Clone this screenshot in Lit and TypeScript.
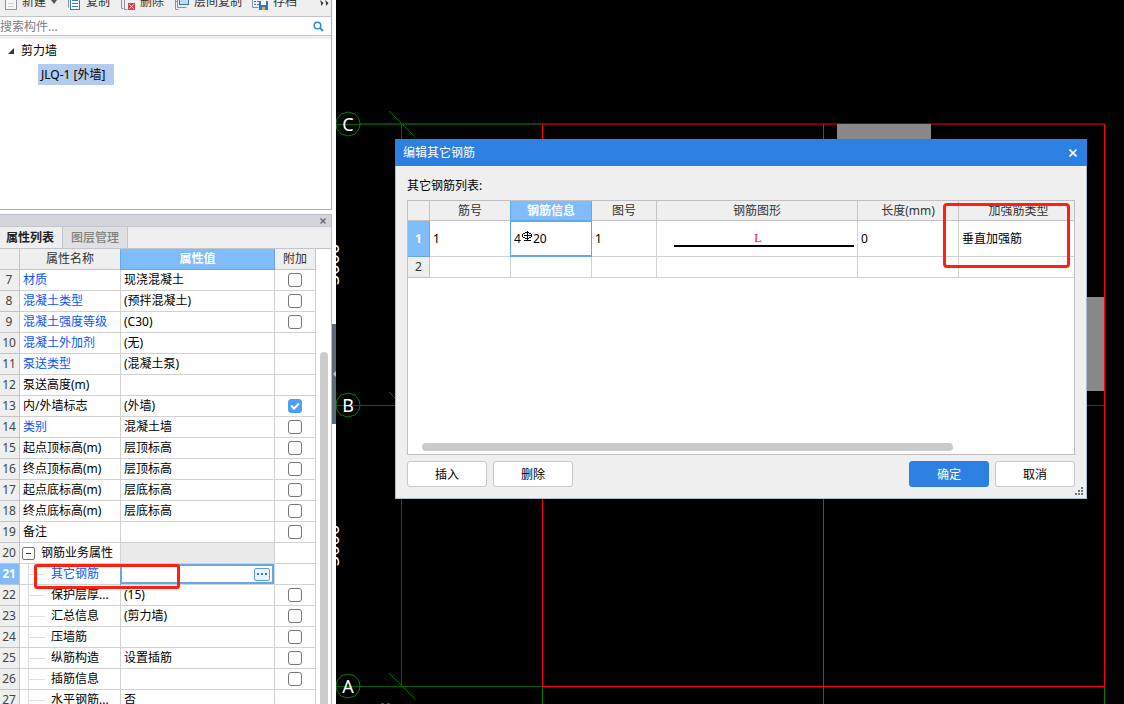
import { LitElement, html, svg, css, nothing } from "lit";
import { customElement, property } from "lit/decorators.js";
import { classMap } from "lit/directives/class-map.js";

interface Prop {
  no: number;
  name: string;
  value?: string;
  link?: boolean;
  box?: boolean;
  checked?: boolean;
  child?: boolean;
  group?: boolean;
  active?: boolean;
}

const PROPS: Prop[] = [
  { no: 7, name: "材质", value: "现浇混凝土", link: true, box: true },
  { no: 8, name: "混凝土类型", value: "(预拌混凝土)", link: true, box: true },
  { no: 9, name: "混凝土强度等级", value: "(C30)", link: true, box: true },
  { no: 10, name: "混凝土外加剂", value: "(无)", link: true },
  { no: 11, name: "泵送类型", value: "(混凝土泵)", link: true },
  { no: 12, name: "泵送高度(m)" },
  { no: 13, name: "内/外墙标志", value: "(外墙)", box: true, checked: true },
  { no: 14, name: "类别", value: "混凝土墙", link: true, box: true },
  { no: 15, name: "起点顶标高(m)", value: "层顶标高", box: true },
  { no: 16, name: "终点顶标高(m)", value: "层顶标高", box: true },
  { no: 17, name: "起点底标高(m)", value: "层底标高", box: true },
  { no: 18, name: "终点底标高(m)", value: "层底标高", box: true },
  { no: 19, name: "备注", box: true },
  { no: 20, name: "钢筋业务属性", group: true },
  { no: 21, name: "其它钢筋", link: true, child: true, active: true },
  { no: 22, name: "保护层厚...", value: "(15)", child: true, box: true },
  { no: 23, name: "汇总信息", value: "(剪力墙)", child: true, box: true },
  { no: 24, name: "压墙筋", child: true, box: true },
  { no: 25, name: "纵筋构造", value: "设置插筋", child: true, box: true },
  { no: 26, name: "插筋信息", child: true, box: true },
  { no: 27, name: "水平钢筋...", value: "否", child: true },
];

const base = css`
  * {
    box-sizing: border-box;
  }
  button,
  input {
    font: inherit;
    color: inherit;
    margin: 0;
    padding: 0;
  }
  button {
    border: 0;
    background: none;
  }
  table {
    border-collapse: separate;
    border-spacing: 0;
    table-layout: fixed;
  }
  th,
  td {
    padding: 0;
    font-weight: 400;
    overflow: hidden;
    white-space: nowrap;
    border-right: 1px solid #d2d2d2;
    border-bottom: 1px solid #d2d2d2;
  }
  th {
    background: #efefef;
    color: #333;
    text-align: center;
    border-color: #c4c4c8;
  }
`;

@customElement("component-tree")
class ComponentTree extends LitElement {
  static styles = [
    base,
    css`
      :host {
        display: block;
        background: #efefef;
        border-right: 1px solid #a9abb2;
        border-bottom: 1px solid #a9abb2;
      }
      .toolbar {
        display: flex;
        align-items: flex-end;
        height: 17px;
        overflow: hidden;
        border-bottom: 1px solid #c3c5cc;
        padding: 0 2px 5px 4px;
      }
      .tool {
        display: flex;
        align-items: center;
        gap: 5px;
        height: 18px;
        line-height: 18px;
        color: #333;
        margin-right: 10px;
        white-space: nowrap;
      }
      .tool svg {
        margin-top: 2px;
      }
      .caret {
        border: 3px solid transparent;
        border-top: 4px solid #555;
        border-bottom: 0;
      }
      .more {
        margin: 0 0 5px auto;
      }
      svg {
        display: block;
      }
      .search {
        display: flex;
        align-items: center;
        height: 19px;
        background: #fff;
        border-bottom: 1px solid #c3c5cc;
        padding-right: 7px;
      }
      .search input {
        flex: 1;
        min-width: 0;
        border: 0;
        outline: 0;
        height: 18px;
        padding-top: 1px;
        background: none;
      }
      .search input::placeholder {
        color: #808080;
        opacity: 1;
      }
      .tree {
        margin: 3px 0 0;
        padding: 0 0 0 8px;
        height: 170px;
        background: #fff;
        list-style: none;
      }
      .node {
        display: flex;
        align-items: center;
        gap: 7px;
        height: 24px;
      }
      .leaf {
        display: inline-block;
        margin-left: 30px;
        height: 21px;
        line-height: 21px;
        margin-top: 1px;
        padding: 0 4px 0 3px;
        min-width: 76px;
        background: #b2cbee;
      }
    `,
  ];

  render() {
    return html`
      <div class="toolbar">
        <button class="tool">
          <svg width="13" height="14" viewBox="0 0 13 14">
            <rect x="1.5" y=".5" width="11" height="13" fill="#f6f6f8" stroke="#8a93a3" />
            <path d="M4 7.500h6M4 10.500h6" stroke="#e2c9cd" />
          </svg>
          新建
          <span class="caret"></span>
        </button>
        <button class="tool">
          <svg width="14" height="14" viewBox="0 0 14 14">
            <path d="M1.500 0v11.500" stroke="#8a93a3" />
            <rect x="3.500" y=".5" width="9" height="13" fill="#fff" stroke="#3577c4" />
            <path d="M5 4.500h6M5 7.500h6M5 10.500h6" stroke="#3577c4" />
          </svg>
          复制
        </button>
        <button class="tool">
          <svg width="15" height="14" viewBox="0 0 15 14">
            <path d="M1.500 0v12.500h2M4.500 0v13.500h3" stroke="#8a93a3" fill="none" />
            <rect x="8" y="7" width="7" height="7" fill="#d9434e" />
            <path d="M9.500 8.500l4 4M13.500 8.500l-4 4" stroke="#fff" />
          </svg>
          删除
        </button>
        <button class="tool">
          <svg width="15" height="14" viewBox="0 0 15 14">
            <path d="M1.500 4v9.500h3M1.500 5.500h2" stroke="#e8762c" fill="none" />
            <path d="M3.500 2v9.500h9" stroke="#e8762c" fill="none" />
            <rect x="5.500" y=".5" width="9" height="8" fill="#bcdcf8" stroke="#3577c4" />
          </svg>
          层间复制
        </button>
        <button class="tool">
          <svg width="16" height="14" viewBox="0 0 16 14">
            <path d="M.5 0v11.500h6" stroke="#8a93a3" fill="none" />
            <path d="M2 5.500h5M2 8.500h5" stroke="#3577c4" stroke-dasharray="2 1" />
            <rect x="7.500" y="5.500" width="8" height="8" fill="#3577c4" stroke="#3577c4" />
            <rect x="9" y="5" width="5" height="4" fill="#fff" />
            <rect x="10" y="11" width="3" height="3" fill="#f2a33a" />
          </svg>
          存档
        </button>
        <button class="more" aria-label="更多">
          <svg width="9" height="6" viewBox="0 0 9 6">
            <path d="M0 0l3.500 3L1 6V3zM5 0l3.500 3L6 6V3z" fill="#333" />
          </svg>
        </button>
      </div>
      <label class="search">
        <input type="text" placeholder="搜索构件..." aria-label="搜索构件" />
        <svg width="11" height="11" viewBox="0 0 11 11" fill="none" stroke="#2f8fd0">
          <circle cx="4.500" cy="4.500" r="3.300" stroke-width="1.500" />
          <path d="M7 7l3 3" stroke-width="2" />
        </svg>
      </label>
      <ul class="tree">
        <li class="node">
          <svg width="6" height="6" viewBox="0 0 6 6"><path d="M6 0v6H0z" fill="#333" /></svg>
          剪力墙
        </li>
        <li class="leaf">JLQ-1 [外墙]</li>
      </ul>
    `;
  }
}

@customElement("property-panel")
class PropertyPanel extends LitElement {
  static styles = [
    base,
    css`
      :host {
        display: flex;
        flex-direction: column;
        min-height: 0;
        border: 1px solid #b9bcc4;
        border-width: 1px 1px 0 0;
        background: #efefef;
        position: relative;
      }
      .dock {
        height: 12px;
        background: #d3d5da;
        border-bottom: 1px solid #c3c5cc;
        display: flex;
        justify-content: flex-end;
        align-items: center;
        padding-right: 5px;
      }
      svg {
        display: block;
      }
      .tabs {
        display: flex;
        height: 22px;
        border-bottom: 1px solid #c3c5cc;
      }
      .tab {
        width: 65px;
        border-right: 1px solid #c3c5cc;
        background: #e0e0e2;
        color: #808080;
        font-weight: 500;
      }
      .tab.on {
        width: 63px;
        padding-right: 2px;
        background: #efefef;
        color: #222;
        font-weight: 700;
      }
      .body {
        flex: 1;
        min-height: 0;
        display: flex;
        background: #fff;
        overflow: hidden;
      }
      table {
        width: 316px;
        flex: none;
        align-self: flex-start;
      }
      .c-no {
        width: 20px;
      }
      .c-name {
        width: 101px;
      }
      .c-val {
        width: 154px;
      }
      .c-add {
        width: 41px;
      }
      tr {
        height: 21px;
      }
      td,
      th {
        height: 21px;
        line-height: 20px;
      }
      td {
        padding-left: 3px;
      }
      thead th.sel {
        background: #80bbfc;
        color: #fff;
        border-color: #64a8ec;
        box-shadow: -1px 0 0 #64a8ec;
        font-weight: 700;
      }
      .no {
        padding-right: 1px;
        color: #444;
      }
      .no.on {
        background: #80bbfc;
        color: #fff;
        font-weight: 700;
      }
      .link {
        color: #0a55ff;
      }
      .group {
        padding-left: 2px;
      }
      .groupline {
        display: flex;
        align-items: center;
        gap: 6px;
      }
      .fold {
        width: 13px;
        height: 13px;
        border: 1px solid #777;
        border-radius: 2px;
        background: #fff;
        display: grid;
        place-items: center;
      }
      .fold::after {
        content: "";
        width: 5px;
        height: 1px;
        background: #333;
      }
      .child {
        padding-left: 8px;
      }
      .childline {
        display: flex;
        align-items: center;
        height: 20px;
        border-left: 1px solid #dedede;
      }
      .childline::before {
        content: "";
        width: 16px;
        height: 1px;
        margin-right: 6px;
        background: #dedede;
      }
      .shade {
        background: #eaeaea;
      }
      .add {
        padding: 0;
      }
      .add input {
        display: block;
        margin: 0 auto;
        appearance: none;
        width: 14px;
        height: 14px;
        border: 1px solid #777;
        border-radius: 3px;
        background: #fff;
      }
      .add input:checked {
        border-color: #4f9df8;
        background: #4f9df8;
      }
      .tick {
        display: grid;
        place-items: center;
      }
      .tick > * {
        grid-area: 1 / 1;
      }
      .tick svg {
        pointer-events: none;
        z-index: 1;
      }
      .edit {
        padding: 0;
        box-shadow: -1px 0 0 #64a8ec;
      }
      .editor {
        display: flex;
        align-items: center;
        height: 20px;
        border: 2px solid #64a8ec;
        border-left-width: 1px;
        padding-right: 2px;
      }
      .editor input {
        flex: 1;
        min-width: 0;
        border: 0;
        outline: 0;
        height: 16px;
        background: none;
      }
      .dots {
        width: 16px;
        height: 13px;
        border: 1px solid #5d9de0;
        border-radius: 2px;
        background: #e9f3fe;
        display: grid;
        place-items: center;
      }
      .track {
        flex: 1;
        padding: 103px 3px 0 4px;
      }
      .thumb {
        height: 100%;
        border-radius: 4px 4px 0 0;
        background: #cbcbcb;
      }
      .mark {
        position: absolute;
        left: 34px;
        top: 349px;
        width: 146px;
        height: 25px;
        border: 3px solid #ff2010;
        border-radius: 3px;
        pointer-events: none;
      }
    `,
  ];

  private nameCell(p: Prop) {
    if (p.group)
      return html`<td class="group">
        <div class="groupline"><button class="fold" aria-label="折叠"></button>${p.name}</div>
      </td>`;
    if (p.child)
      return html`<td class=${classMap({ child: true, link: !!p.link })}>
        <div class="childline">${p.name}</div>
      </td>`;
    return html`<td class=${classMap({ link: !!p.link })}>${p.name}</td>`;
  }

  private valueCell(p: Prop) {
    if (p.active)
      return html`<td class="edit">
        <div class="editor">
          <input type="text" aria-label=${p.name} />
          <button class="dots" aria-label="编辑">
            <svg width="10" height="2" viewBox="0 0 10 2" fill="#2f78d0">
              <path d="M0 0h2v2H0zM4 0h2v2H4zM8 0h2v2H8z" />
            </svg>
          </button>
        </div>
      </td>`;
    return html`<td class=${classMap({ shade: !!p.group })}>${p.value ?? nothing}</td>`;
  }

  render() {
    return html`
      <div class="dock">
        <button aria-label="关闭">
          <svg width="6" height="6" viewBox="0 0 6 6">
            <path d="M.5.5l5 5M5.500.5l-5 5" stroke="#666" stroke-width="1.300" />
          </svg>
        </button>
      </div>
      <div class="tabs">
        <button class="tab on">属性列表</button>
        <button class="tab">图层管理</button>
      </div>
      <div class="body">
        <table>
          <colgroup>
            <col class="c-no" />
            <col class="c-name" />
            <col class="c-val" />
            <col class="c-add" />
          </colgroup>
          <thead>
            <tr>
              <th></th>
              <th>属性名称</th>
              <th class="sel">属性值</th>
              <th>附加</th>
            </tr>
          </thead>
          <tbody>
            ${PROPS.map(
              (p) => html`<tr>
                <th class=${classMap({ no: true, on: !!p.active })}>${p.no}</th>
                ${this.nameCell(p)}${this.valueCell(p)}
                <td class="add">
                  ${p.box
                    ? html`<label class="tick">
                        <input type="checkbox" aria-label=${p.name} ?checked=${p.checked} />
                        ${p.checked
                          ? html`<svg width="10" height="8" viewBox="0 0 10 8">
                              <path d="M1 3.500l3 3L9 1.500" fill="none" stroke="#fff" stroke-width="2" />
                            </svg>`
                          : nothing}
                      </label>`
                    : nothing}
                </td>
              </tr>`
            )}
          </tbody>
        </table>
        <div class="track"><div class="thumb"></div></div>
      </div>
      <div class="mark"></div>
    `;
  }
}

@customElement("rebar-dialog")
class RebarDialog extends LitElement {
  static styles = [
    base,
    css`
      :host {
        display: flex;
        flex-direction: column;
        background: #efefef;
        border: 1px solid #b4bccf;
        border-top: 0;
      }
      .title {
        display: flex;
        align-items: center;
        justify-content: space-between;
        height: 27px;
        margin: 0 -1px;
        padding: 0 10px 0 8px;
        background: #2c80e2;
        color: #fff;
      }
      svg {
        display: block;
      }
      .content {
        flex: 1;
        display: flex;
        flex-direction: column;
        padding: 11px 11px 11px;
        position: relative;
      }
      .caption {
        height: 23px;
        line-height: 18px;
      }
      .grid {
        flex: 1;
        display: flex;
        flex-direction: column;
        justify-content: space-between;
        border: 1px solid #c0c0c4;
        background: #fff;
        overflow: hidden;
      }
      table {
        width: 671px;
      }
      .w0 {
        width: 22px;
      }
      .w1,
      .w2 {
        width: 81px;
      }
      .w3 {
        width: 65px;
      }
      .w4 {
        width: 201px;
      }
      .w5 {
        width: 101px;
      }
      .w6 {
        width: 120px;
      }
      thead th {
        height: 20px;
        line-height: 18px;
        padding-top: 1px;
      }
      th.sel {
        background: #80bbfc;
        color: #fff;
        font-weight: 700;
        border-color: #64a8ec;
        box-shadow: -1px 0 0 #64a8ec;
      }
      .row1 > * {
        height: 36px;
      }
      .row2 > * {
        height: 21px;
        line-height: 20px;
      }
      td {
        padding-left: 3px;
      }
      .focus {
        padding: 0 0 0 3px;
        border: 2px solid #64a8ec;
        border-width: 1px 1px 2px 0;
        box-shadow: -1px 0 0 #64a8ec;
      }
      .info {
        display: flex;
        align-items: center;
      }
      .info svg {
        margin-bottom: 4px;
      }
      .shape {
        padding: 0;
      }
      .bar {
        margin: 0 3px 0 17px;
        border-bottom: 2px solid #000;
        height: 17px;
        padding-right: 12px;
        font: 12px/16px "Liberation Serif", serif;
        color: #f00;
        text-align: center;
      }
      .thumb {
        width: 531px;
        height: 8px;
        margin: 0 0 3px 14px;
        border-radius: 4px;
        background: #cbcbcb;
      }
      .actions {
        display: flex;
        gap: 6px;
        padding-top: 6px;
      }
      .btn {
        width: 80px;
        height: 26px;
        padding-top: 1px;
        border: 1px solid #c8c8cc;
        border-radius: 3px;
        background: #fff;
      }
      .primary {
        margin-left: auto;
        border-color: #2c80e2;
        background: #2c80e2;
        color: #fff;
      }
      .grip {
        position: absolute;
        right: 3px;
        bottom: 3px;
      }
      .mark {
        position: absolute;
        right: 16px;
        top: 37px;
        width: 127px;
        height: 65px;
        border: 3px solid #ff2010;
        border-radius: 4px;
        pointer-events: none;
      }
    `,
  ];

  render() {
    return html`
      <div class="title">
        编辑其它钢筋
        <button aria-label="关闭">
          <svg width="8" height="8" viewBox="0 0 8 8">
            <path d="M.5.5l7 7M7.500.5l-7 7" stroke="#fff" stroke-width="1.600" />
          </svg>
        </button>
      </div>
      <div class="content">
        <div class="caption">其它钢筋列表:</div>
        <div class="grid">
          <table>
            <colgroup>
              ${[0, 1, 2, 3, 4, 5, 6].map((i) => html`<col class="w${i}" />`)}
            </colgroup>
            <thead>
              <tr>
                <th></th>
                <th>筋号</th>
                <th class="sel">钢筋信息</th>
                <th>图号</th>
                <th>钢筋图形</th>
                <th>长度(mm)</th>
                <th>加强筋类型</th>
              </tr>
            </thead>
            <tbody>
              <tr class="row1">
                <th class="sel">1</th>
                <td>1</td>
                <td class="focus">
                  <span class="info"
                    >4<svg width="12" height="11" viewBox="0 0 12 11" fill="none" stroke="#000">
                      <path d="M4 1.500h4M4 7.500h4M1.500 3v3M10.500 3v3M2 2.500h2M8 2.500h2M2 6.500h2M8 6.500h2" />
                      <path d="M6.500 0v10M3 4.500h7M3 9.500h7" /></svg
                    >20</span
                  >
                </td>
                <td>1</td>
                <td class="shape"><div class="bar">L</div></td>
                <td>0</td>
                <td>垂直加强筋</td>
              </tr>
              <tr class="row2">
                <th>2</th>
                <td></td>
                <td></td>
                <td></td>
                <td></td>
                <td></td>
                <td></td>
              </tr>
            </tbody>
          </table>
          <div class="thumb"></div>
        </div>
        <div class="actions">
          <button class="btn">插入</button>
          <button class="btn">删除</button>
          <button class="btn primary">确定</button>
          <button class="btn">取消</button>
        </div>
        <svg class="grip" width="8" height="8" viewBox="0 0 8 8" fill="#70747c">
          <path d="M6 0h2v2H6zM3 3h2v2H3zM6 3h2v2H6zM0 6h2v2H0zM3 6h2v2H3zM6 6h2v2H6z" />
        </svg>
        <div class="mark"></div>
      </div>
    `;
  }
}

@customElement("app-root")
class AppRoot extends LitElement {
  @property({ attribute: false }) axes = [
    { label: "C", y: 124 },
    { label: "B", y: 405 },
    { label: "A", y: 686 },
  ];

  static styles = [
    base,
    css`
      :host {
        display: flex;
        height: 100vh;
        overflow: hidden;
        background: #fff;
        color: #000;
        font: 12px/18px "Noto Sans", "Noto Sans CJK SC", sans-serif;
      }
      .side {
        flex: 0 0 332px;
        display: flex;
        flex-direction: column;
        gap: 4px;
      }
      component-tree {
        flex: none;
      }
      property-panel {
        flex: 1;
      }
      .split {
        flex: 0 0 4px;
        padding-top: 324px;
      }
      .handle {
        display: grid;
        place-items: center;
        width: 4px;
        height: 100px;
        background: #5f6a77;
      }
      .canvas {
        flex: 1;
        position: relative;
        overflow: hidden;
        background: #000;
      }
      .drawing {
        display: block;
      }
      .axis {
        font-size: 18px;
        fill: #fff;
        text-anchor: middle;
      }
      .dim {
        font-size: 18px;
        fill: #fff;
      }
      rebar-dialog {
        position: absolute;
        left: 59px;
        top: 139px;
        width: 692px;
        height: 360px;
      }
    `,
  ];

  render() {
    return html`
      <div class="side">
        <component-tree></component-tree>
        <property-panel></property-panel>
      </div>
      <div class="split">
        <button class="handle" aria-label="收起">
          <svg width="3" height="6" viewBox="0 0 3 6"><path d="M3 0v6L0 3z" fill="#c0c6cc" /></svg>
        </button>
      </div>
      <main class="canvas">
        <svg class="drawing" width="788" height="704" viewBox="336 0 788 704" fill="none">
          <path d="M360 124H542" stroke="#004800" stroke-width="2" />
          <path d="M360 405.500H542M336 686.500H542" stroke="#006000" />
          <path d="M401.500 124V686" stroke="#006000" />
          <path d="M542.500 686V704M823.500 686V704M1104.500 686V704" stroke="#008000" />
          <path d="M542 124H1105" stroke="#800000" stroke-width="2" />
          <rect x="837" y="124" width="94" height="90" fill="#888" />
          <rect x="1040" y="297" width="65" height="94" fill="#888" />
          <path d="M542 405.500H1105" stroke="#b00000" />
          <path d="M542.500 124V686.500H1104.500V124M823.500 124V686" stroke="#f00" />
          <path d="M381 703.500h3M387 703.500h3" stroke="#008000" />
          ${this.axes.map(
            (a) => svg`
              <path d="M389 ${a.y - 13}l26 26" stroke="#007000" />
              <path d="M336 ${a.y + 0.5}h24" stroke="#006000" />
              <polygon stroke="#008000" transform="translate(348 ${a.y})"
                points="0,-12 7,-10 11,-5 12,0 11,5 7,10 0,12 -7,10 -11,5 -12,0 -11,-5 -7,-10" />
              <text class="axis" x="348" y=${a.y + 7}>${a.label}</text>`
          )}
          <text class="dim" transform="translate(339 285) rotate(-90)">3000</text>
          <text class="dim" transform="translate(339 566) rotate(-90)">3000</text>
        </svg>
        <rebar-dialog></rebar-dialog>
      </main>
    `;
  }
}
